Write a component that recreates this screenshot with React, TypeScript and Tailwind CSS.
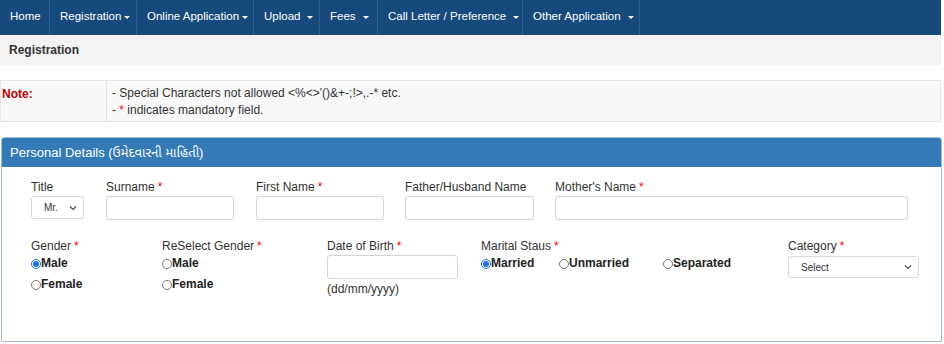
import React from "react";

const Caret = () => (
  <span className="inline-block ml-[3px] align-middle w-0 h-0 border-l-[3px] border-r-[3px] border-t-[3px] border-l-transparent border-r-transparent border-t-white" />
);

const Star = () => <span className="text-[#ff0000] ml-[3px]">*</span>;

const navItems: { label: string; w: string; caret: boolean; gap?: boolean }[] = [
  { label: "Home", w: "w-[50px]", caret: false },
  { label: "Registration", w: "w-[87px]", caret: true },
  { label: "Online Application", w: "w-[117px]", caret: true },
  { label: "Upload", w: "w-[66px]", caret: true, gap: true },
  { label: "Fees", w: "w-[58px]", caret: true, gap: true },
  { label: "Call Letter / Preference", w: "w-[145px]", caret: true, gap: true },
  { label: "Other Application", w: "w-[117px]", caret: true, gap: true },
];

const Radio = ({ checked, label }: { checked?: boolean; label: string }) => (
  <label className="flex items-center text-[12px] font-bold text-[#222] leading-none">
    {checked ? (
      <span className="w-[10px] h-[10px] rounded-full border border-[#1a73e8] bg-white flex items-center justify-center mt-[2px]">
        <span className="w-[6px] h-[6px] rounded-full bg-[#1a73e8]" />
      </span>
    ) : (
      <span className="w-[10px] h-[10px] rounded-full border border-[#767676] bg-white mt-[2px]" />
    )}
    <span>{label}</span>
  </label>
);

const Input = ({ w }: { w: string }) => (
  <div className={`${w} h-[24px] border border-[#d4d4d4] rounded-[3px] bg-white`} />
);

export default function App() {
  return (
    <div className="w-[944px] h-[344px] bg-white overflow-hidden" style={{ fontFamily: '"Liberation Sans", Arial, sans-serif' }}>
      {/* Navbar */}
      <div className="w-[941px] h-[35px] bg-[#174a7c] flex items-stretch text-white text-[11.5px]">
        {navItems.map((n) => (
          <div key={n.label} className={`${n.w} flex items-center pl-[10px] pb-[1px] border-r border-[#2b5d8d] whitespace-nowrap`}>
            <span>{n.label}</span>
            {n.caret && (n.gap ? <span className="ml-[4px] flex"><Caret /></span> : <Caret />)}
          </div>
        ))}
      </div>
      {/* Registration bar */}
      <div className="w-[941px] h-[30px] bg-[#f3f3f3] flex items-center pl-[9px] text-[12px] font-bold text-[#333]">
        Registration
      </div>
      {/* Note */}
      <div className="mt-[15px] w-[941px] h-[42px] bg-[#f8f8f8] border border-[#e6e6e6] flex text-[12px]">
        <div className="w-[106px] border-r border-[#e3e3e3] pl-[1px] pt-[4px] text-[#c00000] font-bold">Note:</div>
        <div className="pl-[5px] pt-[4px] text-[#333] leading-[17px]">
          <div>- Special Characters not allowed &lt;%&lt;&gt;'()&amp;+-;!&gt;,.-* etc.</div>
          <div>- <span className="text-[#ff0000]">*</span> indicates mandatory field.</div>
        </div>
      </div>
      {/* Panel */}
      <div className="mt-[15px] ml-[1px] w-[941px] h-[205px] border border-[#9fbddb] rounded-t-[3px] overflow-hidden">
        <div className="h-[29px] bg-[#337ab7] flex items-center pl-[8px] text-white text-[13px]" style={{ fontFamily: '"Liberation Sans", "Noto Sans Gujarati", "Noto Sans", sans-serif' }}>
          Personal Details (ઉમેદવારની માહિતી)
        </div>
        <div className="pl-[29px] pt-[12px] text-[12px] text-[#333]">
          {/* Row 1 */}
          <div className="flex">
            <div className="w-[75px]">
              <div className="h-[16px] leading-[16px]">Title</div>
              <div className="mt-[1px] w-[53px] h-[23px] border border-[#d9d9d9] rounded-[3px] flex items-center justify-between pl-[12px] pr-[6px] text-[10px]">
                <span>Mr.</span>
                <svg width="8" height="6" viewBox="0 0 8 6"><path d="M1 1.5 L4 4.5 L7 1.5" stroke="#444" strokeWidth="1.1" fill="none" /></svg>
              </div>
            </div>
            <div className="w-[150px]">
              <div className="h-[16px] leading-[16px]">Surname<Star /></div>
              <div className="mt-[1px]"><Input w="w-[128px]" /></div>
            </div>
            <div className="w-[149px]">
              <div className="h-[16px] leading-[16px]">First Name<Star /></div>
              <div className="mt-[1px]"><Input w="w-[128px]" /></div>
            </div>
            <div className="w-[150px]">
              <div className="h-[16px] leading-[16px]">Father/Husband Name</div>
              <div className="mt-[1px]"><Input w="w-[129px]" /></div>
            </div>
            <div className="w-[353px]">
              <div className="h-[16px] leading-[16px]">Mother's Name<Star /></div>
              <div className="mt-[1px]"><Input w="w-[353px]" /></div>
            </div>
          </div>
          {/* Row 2 */}
          <div className="flex mt-[18px]">
            <div className="w-[131px]">
              <div className="h-[16px] leading-[16px]">Gender<Star /></div>
              <div className="mt-[3px]"><Radio checked label="Male" /></div>
              <div className="mt-[9px]"><Radio label="Female" /></div>
            </div>
            <div className="w-[165px]">
              <div className="h-[16px] leading-[16px]">ReSelect Gender<Star /></div>
              <div className="mt-[3px]"><Radio label="Male" /></div>
              <div className="mt-[9px]"><Radio label="Female" /></div>
            </div>
            <div className="w-[154px]">
              <div className="h-[16px] leading-[16px]">Date of Birth<Star /></div>
              <div className="mt-[1px]"><Input w="w-[131px]" /></div>
              <div className="mt-[2px] leading-[16px]">(dd/mm/yyyy)</div>
            </div>
            <div className="w-[307px]">
              <div className="h-[16px] leading-[16px]">Marital Staus<Star /></div>
              <div className="mt-[3px] flex">
                <div className="w-[78px]"><Radio checked label="Married" /></div>
                <div className="w-[104px]"><Radio label="Unmarried" /></div>
                <div><Radio label="Separated" /></div>
              </div>
            </div>
            <div className="w-[131px]">
              <div className="h-[16px] leading-[16px]">Category<Star /></div>
              <div className="mt-[2px] w-[131px] h-[22px] border border-[#d9d9d9] rounded-[3px] flex items-center justify-between pl-[12px] pr-[6px] text-[10px]">
                <span>Select</span>
                <svg width="8" height="6" viewBox="0 0 8 6"><path d="M1 1.5 L4 4.5 L7 1.5" stroke="#444" strokeWidth="1.1" fill="none" /></svg>
              </div>
            </div>
          </div>
        </div>
      </div>
    </div>
  );
}
